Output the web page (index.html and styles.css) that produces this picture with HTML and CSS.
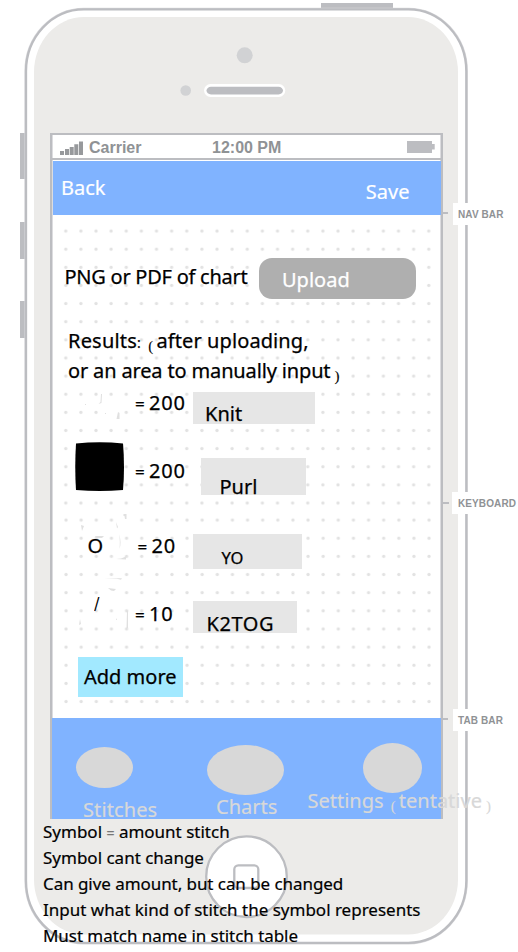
FILE: index.html
```html
<!DOCTYPE html>
<html lang="en">
<head>
<meta charset="utf-8">
<title>Chart upload wireframe</title>
<link rel="stylesheet" href="styles.css">
</head>
<body>
<main class="canvas">
  <svg class="frame" width="518" height="952" viewBox="0 0 518 952" aria-hidden="true">
    <g fill="#bcbdc1">
      <rect x="321" y="3" width="72" height="7"/>
      <rect x="20" y="133" width="7" height="46"/>
      <rect x="20" y="222" width="7" height="37"/>
      <rect x="20" y="301" width="7" height="37"/>
    </g>
    <rect x="26" y="9.300" width="440.3" height="933.500" rx="58" ry="62" fill="#fff" stroke="#d9d9dc" stroke-width="3.200"/>
    <rect x="26" y="9.300" width="440.3" height="933.500" rx="58" ry="62" fill="#fff" stroke="#bcbdc1" stroke-width="2.300"/>
    <rect x="34" y="17" width="424" height="917.5" rx="50" ry="55" fill="#ecebe9"/>
    <circle cx="244.7" cy="55.3" r="8" fill="#d1d2d4"/>
    <circle cx="185.7" cy="90.5" r="5.3" fill="#d1d2d4"/>
    <rect x="204" y="84" width="81.300" height="13" rx="6.500" fill="#fff"/>
    <rect x="206.500" y="86.800" width="76.500" height="7.600" rx="4.500" ry="3.800" fill="#bcbdc1"/>
    <circle cx="246.500" cy="876.700" r="40.300" fill="#fff" stroke="#bcbdc1" stroke-width="2.300"/>
    <rect x="234.300" y="865.300" width="24" height="22.700" rx="4" fill="none" stroke="#bcbdc1" stroke-width="2.300"/>
  </svg>

  <section class="screen">
    <header class="status">
      <svg class="signal" width="23" height="14" viewBox="0 0 23 14" fill="#97999c"><path d="M0 10h4v4H0zM5 8h4v6H5zM9.700 6h4v8h-4zM14.300 3.300h4V14h-4zM19 .5h4V14h-4z"/></svg>
      <span class="carrier">Carrier</span>
      <span class="clock">12:00 PM</span>
      <svg class="battery" width="28" height="12" viewBox="0 0 28 12" fill="#bcbdc1"><path d="M0 0h25v3h2.700v5.500H25V12H0z"/></svg>
    </header>
    <nav class="navbar"><span class="back">Back</span><span class="save">Save</span></nav>

    <div class="content">
      <svg class="dots" width="388" height="503" viewBox="53 215 388 503" aria-hidden="true">
        <defs>
          <pattern id="d1" x="58.200" y="222" width="15.125" height="18.130" patternUnits="userSpaceOnUse"><circle cx="7.560" cy="9.060" r="1.650" fill="#e2e2e2"/></pattern>
          <pattern id="d2" x="58.500" y="511" width="15.125" height="18.150" patternUnits="userSpaceOnUse"><circle cx="7.560" cy="9.060" r="1.650" fill="#e2e2e2"/></pattern>
        </defs>
        <rect x="58.200" y="222" width="378" height="289" fill="url(#d1)"/>
        <rect x="58.500" y="511" width="378" height="199" fill="url(#d2)"/>
        <path fill="#fff" d="M104 407h12v12h-12zM119 516h15v7h-15zM104 587h12v10h-12z"/>
        <g fill="#e0e0e0">
          <path d="M101 394l1 0-.5 9-3 1 2-2zM118 412l1.500 1v6h-3zM85 404h1v1h-1zM105 413h1v1h-1z"/>
          <path d="M123.500 514h3v5h-1.500l-.5-3h-1zM81 525l3 1-2 5zM116 522l2 5-1 1.500zM119 534c2 6 2 11 .5 15 .5-5 .5-10-.5-15zM95 536h9l-2 2h-6zM116 559l5-.5 5-2v3z"/>
          <path d="M104 578l18 .2-1 1.500-4-1zM108 588l8 1-2 2-3-.5zM127 610l1 1v17l-1.500 1zM80 619l1 5-2 1zM116 618l1 2h-1z"/>
        </g>
      </svg>
      <div class="upload-row">
        <span class="prompt">PNG or PDF of chart</span>
        <button class="upload"><span>Upload</span></button>
      </div>
      <p class="results"><span class="r1"><span class="label">Results<small>:</small></span> <small class="par open">(</small>after uploading,</span><br><span class="r2">or an area to manually input<small class="par close">)</small></span></p>
      <div class="stitch s1"><span class="symbol"></span><span class="amount"><small>=</small><b>200</b></span><span class="field"><span>Knit</span></span></div>
      <div class="stitch s2"><svg class="symbol square" width="50" height="50" viewBox="0 0 50 50"><path d="M1 1.500Q25-.8 48 1.500Q50 25 48 48Q25 50 1 48Q-.5 25 1 1.500z"/></svg><span class="amount"><small>=</small><b>200</b></span><span class="field"><span>Purl</span></span></div>
      <div class="stitch s3"><span class="symbol">O</span><span class="amount"><small>=</small><b>20</b></span><span class="field"><span>YO</span></span></div>
      <div class="stitch s4"><span class="symbol">/</span><span class="amount"><small>=</small><b>10</b></span><span class="field"><span>K2TOG</span></span></div>
      <button class="add"><span>Add more</span></button>
    </div>

    <footer class="tabs">
      <div class="tab t1"><i></i><span>Stitches</span></div>
      <div class="tab t2"><i></i><span>Charts</span></div>
      <div class="tab t3"><i></i><span>Settings <small class="par open">(</small>tentative<small class="par close">)</small></span></div>
    </footer>
  </section>

  <section class="notes">
    <p class="n1"><span>Symbol <small>=</small> amount stitch</span></p>
    <p class="n2"><span>Symbol cant change</span></p>
    <p class="n3"><span>Can give amount, but can be changed</span></p>
    <p class="n4"><span>Input what kind of stitch the symbol represents</span></p>
    <p class="n5"><span>Must match name in stitch table</span></p>
  </section>

  <aside class="callout c1"><span>NAV BAR</span></aside>
  <aside class="callout c2"><span>KEYBOARD</span></aside>
  <aside class="callout c3"><span>TAB BAR</span></aside>
</main>
</body>
</html>
```

FILE: styles.css
```css
* { box-sizing: border-box; margin: 0; padding: 0; }
html, body { width: 518px; height: 952px; overflow: hidden; background: #fff; }
body { font: 20px/24px "Noto Sans", "Open Sans", sans-serif; color: #000; }
button { border: 0; font: inherit; color: inherit; text-align: left; }
b { font-weight: 400; }
i { font-style: normal; }
small { font-size: 14px; line-height: 1; }
svg { display: block; flex: none; }
span { white-space: nowrap; }

.canvas { position: relative; width: 518px; height: 952px; overflow: hidden; padding: 133px 0 0 50px; }
.frame { position: absolute; left: 0; top: 0; }

.screen { position: relative; width: 393px; height: 686px; border: solid #bcbdc1; border-width: 2px 2px 0 2px; background: #fff; box-shadow: inset 1px 0 #dcdcdf, inset -1px 0 #dcdcdf; }
.status { display: flex; height: 26px; border-bottom: 2px solid #bcbdc1; padding-left: 8px; margin-top: -1px; font: bold 16px/26px "Liberation Sans", sans-serif; color: #8f9295; }
.signal { margin-top: 7px; }
.carrier { flex: none; width: 129px; padding: 1px 0 0 6px; }
.clock { flex: none; width: 195px; padding-top: 1px; }
.battery { margin-top: 7px; }
.navbar { display: flex; justify-content: space-between; height: 54px; margin: 1px 0 0 1px; padding: 15px 31.500px 0 8px; background: #80b3ff; color: #fff; -webkit-text-stroke: .2px; }
.save { margin-top: 4px; }

.content { position: relative; height: 503px; padding-top: 43px; margin-left: 1px; -webkit-text-stroke: .25px; }
.dots { position: absolute; left: 0; top: 0; }
.upload-row, .results, .stitch, .add { position: relative; }
.upload-row { display: flex; height: 41px; padding-left: 11.500px; }
.prompt { flex: none; width: 194.500px; padding-top: 7px; letter-spacing: -.25px; }
.upload { flex: none; width: 157px; height: 41px; border-radius: 13px; background: #afafaf; color: #fff; padding: 2px 0 0 23px; letter-spacing: 0; }
.results { height: 93px; padding: 27px 0 0 15px; line-height: 30px; }
.r1 { letter-spacing: .1px; }
.label { letter-spacing: .2px; }
.r2 { letter-spacing: -.15px; }
.par { position: relative; top: 3px; font: 15px/1 "Liberation Serif", serif; -webkit-text-stroke: .1px; }
.par.open { margin: 0 3px 0 2px; }
.par.close { margin-left: 4px; }

.stitch { display: flex; }
.symbol { flex: none; width: 60px; }
.amount { display: flex; flex: none; align-items: baseline; align-self: flex-start; letter-spacing: .8px; }
.amount small { font-size: 17px; width: 14px; margin-right: 0; }
.field { flex: none; background: #e6e6e6; }
.field span { display: block; }
.s1 { height: 50px; padding-left: 22px; }
.s1 .amount { width: 58px; margin-top: -1px; }
.s1 .field { width: 122px; height: 32px; padding: 10px 0 0 12px; }
.s2 { height: 92px; padding-left: 22px; }
.s2 .square { width: 50px; margin-right: 10px; }
.s2 .amount { width: 66px; padding-top: 17px; }
.s2 .field { width: 105px; height: 37px; margin-top: 16px; padding: 17px 0 0 18.500px; }
.s3 { height: 67px; padding-left: 34.500px; }
.s3 .symbol { width: 50px; }
.s3 .amount { width: 55.500px; }
.s3 .field { width: 109px; height: 35px; padding: 12px 0 0 28.500px; font-size: 16.5px; }
.s4 { height: 56px; padding-left: 41px; }
.s4 .symbol { width: 41px; margin-top: -9px; font-size: 20px; transform-origin: 0 50%; transform: scaleX(.75); -webkit-text-stroke: 0; }
.s4 .amount { width: 58px; padding-top: 1px; }
.s4 .field { width: 104px; height: 32px; padding: 11px 0 0 13.500px; letter-spacing: .6px; }
.add { display: block; width: 105px; height: 40px; margin-left: 25px; padding-left: 6px; background: #a2e9ff; }

.tabs { position: relative; display: flex; height: 101px; background: #80b3ff; color: #d8d8d8; -webkit-text-stroke: .2px; }
.tab { display: flex; flex: none; flex-direction: column; }
.tab i { border-radius: 50%; background: #d8d8d8; flex: none; }
.t1 { width: 131px; padding: 29px 0 0 24px; }
.t1 i { width: 57px; height: 41px; margin-bottom: 10px; }
.t1 span { margin-left: 7px; letter-spacing: .1px; }
.t2 { width: 124px; padding: 27px 0 0 24px; }
.t2 i { width: 77px; height: 50px; margin-bottom: 0; }
.t2 span { margin-left: 9px; }
.t3 { padding-top: 25px; }
.t3 i { width: 59px; height: 50px; margin: 0 0 -4px 56px; }
.t3 > span { margin-left: .5px; }

.notes { position: relative; margin-left: -7px; font-size: 17px; line-height: 26px; -webkit-text-stroke: .2px; }
.notes small { font-size: 14px; color: #777; }
.n3 { letter-spacing: -.06px; }
.n5 { letter-spacing: -.05px; }

.callout { position: absolute; left: 453px; width: 65px; height: 22px; padding-left: 5px; background: #fff; font: bold 10px/23px "Liberation Sans", sans-serif; letter-spacing: .1px; color: #8f9295; }
.callout::before { content: ""; position: absolute; left: -10px; top: 9px; width: 5px; height: 2px; background: #bcbdc1; }
.c1 { top: 203px; }
.c2 { top: 492px; left: 452px; padding-left: 6px; }
.c2::before { left: -9px; top: 10px; width: 6px; }
.c3 { top: 709px; }
```
